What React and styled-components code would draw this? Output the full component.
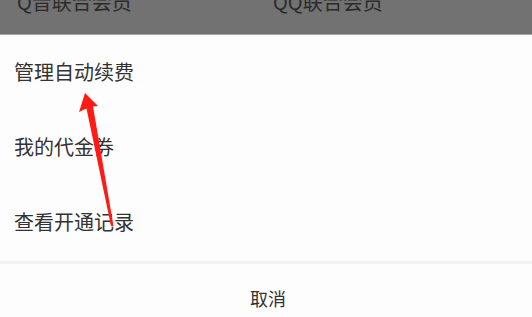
import styled, { createGlobalStyle } from "styled-components";

const GlobalStyle = createGlobalStyle`
  html, body {
    margin: 0;
    padding: 0;
    background: #fefdfe;
    overflow: hidden;
  }
  body {
    font-family: "Noto Sans CJK SC", "Noto Sans", sans-serif;
  }
`;

const Page = styled.div`
  position: relative;
  width: 532px;
  height: 317px;
  overflow: hidden;
  background: #fefdfe;
`;

const TopBar = styled.div`
  height: 34px;
  background: #727272;
  border-bottom: 1px solid #a9a9a9;
  display: grid;
  grid-template-columns: 256px 1fr;
  padding-left: 17px;
  overflow: hidden;
`;

const TopLabel = styled.span`
  margin-top: -8px;
  font-size: 20px;
  line-height: 20px;
  color: #2b2b2b;
`;

const Menu = styled.div`
  display: flex;
  flex-direction: column;
`;

const MenuItem = styled.div`
  height: 75px;
  box-sizing: border-box;
  padding-bottom: 2px;
  display: flex;
  align-items: center;
  padding-left: 14px;
  font-size: 20px;
  color: #333;
`;

const Divider = styled.div`
  height: 3px;
  background: #f4f1f5;
  margin-top: 1px;
`;

const CancelRow = styled.div`
  height: 72px;
  box-sizing: border-box;
  padding-bottom: 4px;
  display: flex;
  align-items: center;
  justify-content: center;
  font-size: 18px;
  color: #333;
  padding-left: 4px;
`;

const Arrow = styled.svg`
  position: absolute;
  left: 0;
  top: 0;
  pointer-events: none;
`;

const App = () => {
  const items = ["管理自动续费", "我的代金券", "查看开通记录"];
  return (
    <Page>
      <GlobalStyle />
      <TopBar>
        <TopLabel>Q音联合会员</TopLabel>
        <TopLabel>QQ联合会员</TopLabel>
      </TopBar>
      <Menu>
        {items.map((label) => (
          <MenuItem key={label}>{label}</MenuItem>
        ))}
      </Menu>
      <Divider />
      <CancelRow>取消</CancelRow>
      <Arrow width="532" height="317" viewBox="0 0 532 317">
        <polygon
          points="85,93 79,112 86.5,108.5 111,226 113.5,226 93,106.5 98,106"
          fill="#ff1a14"
        />
      </Arrow>
    </Page>
  );
};

export default App;
